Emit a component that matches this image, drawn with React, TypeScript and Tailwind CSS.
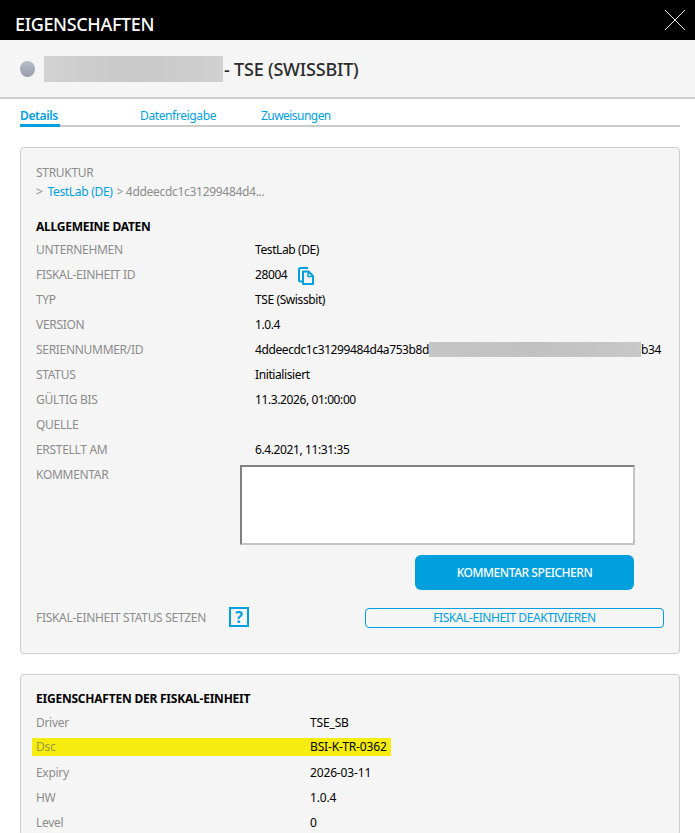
import React from "react";

const F = "font-['Noto_Sans','Open_Sans',sans-serif]";

function Row({ label, children }: { label: string; children?: React.ReactNode }) {
  return (
    <div className="flex h-[25px] items-center">
      <div className="w-[219px] shrink-0 text-[#8c8c8c]">{label}</div>
      <div className="flex items-center whitespace-nowrap tracking-[-0.4px] text-black">{children}</div>
    </div>
  );
}

function Row2({ label, value }: { label: string; value: string }) {
  return (
    <div className="flex h-[25px] items-center">
      <div className="w-[274px] shrink-0 text-[#8c8c8c]">{label}</div>
      <div className="whitespace-nowrap tracking-[-0.15px] text-black">{value}</div>
    </div>
  );
}

export default function App() {
  return (
    <div className={`${F} h-[833px] w-[695px] overflow-hidden bg-white text-[12px] tracking-[-0.3px]`}>
      <header className="flex h-10 items-center justify-between bg-black pl-[15px] pr-[10px] text-white">
        <div className="pt-[9px] text-[18px] font-medium tracking-[-0.35px]">EIGENSCHAFTEN</div>
        <svg width="20" height="20" viewBox="0 0 20 20" stroke="#e8e8e8" strokeWidth="1" fill="none">
          <path d="M0 0 L20 20 M20 0 L0 20" />
        </svg>
      </header>

      <section className="flex h-[59px] items-center border-b-2 border-[#cccccc] bg-[#f5f5f5] pl-5">
        <span className="h-[16px] w-[15px] rounded-full bg-gradient-to-b from-[#b8bcc8] to-[#9a9eac]" />
        <span className="ml-[9px] h-[26px] w-[179px] bg-gradient-to-r from-[#d2d2d2] via-[#c8c8c8] to-[#d0d0d0]" />
        <span className="ml-[1px] pt-[2px] text-[18px] font-medium tracking-[-0.2px] text-[#2b2b2b]">- TSE (SWISSBIT)</span>
      </section>

      <nav className="ml-5 mr-[15px] mt-[8px] flex h-[20px] border-b-2 border-[#cccccc] tracking-[-0.38px] text-[#00a0df]">
        <div className="-mb-[2px] w-[40px] border-b-[3px] border-[#00a0df] font-semibold">Details</div>
        <div className="ml-[80px]">Datenfreigabe</div>
        <div className="ml-[45px] tracking-[-0.55px]">Zuweisungen</div>
      </nav>

      <section className="ml-5 mr-[15px] mt-5 h-[507px] rounded-[4px] border border-[#cccccc] bg-[#f5f5f5] pl-[15px] pr-[15px] pt-[15px]">
        <div className="flex h-[19px] items-center text-[#8c8c8c]">STRUKTUR</div>
        <div className="flex h-[19px] items-center whitespace-pre text-[#8c8c8c]">
          {"> "}
          <span className="ml-[2px] mr-[1px] text-[#00a0df]">TestLab (DE)</span>
          {" > 4ddeecdc1c31299484d4..."}
        </div>
        <div className="mt-[16px] flex h-[20px] items-center font-bold tracking-[-0.25px] text-black">ALLGEMEINE DATEN</div>
        <div>
          <Row label="UNTERNEHMEN">TestLab (DE)</Row>
          <Row label="FISKAL-EINHEIT ID">
            28004
            <svg width="16" height="18" viewBox="0 0 16 18" className="ml-[11px] mt-[2px]" fill="none" stroke="#00a0df" strokeWidth="2" strokeLinejoin="round">
              <path d="M4 14.5 H2.5 Q1 14.5 1 13 V2.5 Q1 1 2.5 1 H10" />
              <path d="M5 4.5 H10.5 L15 9 V17 H5 Z" />
              <path d="M10 4.5 V9.5 H15" strokeWidth="1.5" />
            </svg>
          </Row>
          <Row label="TYP">TSE (Swissbit)</Row>
          <Row label="VERSION">1.0.4</Row>
          <Row label="SERIENNUMMER/ID">
            4ddeecdc1c31299484d4a753b8d
            <span className="h-[15px] w-[212px] bg-gradient-to-r from-[#c6c6c6] via-[#c0c0c0] to-[#c8c8c8]" />
            b34
          </Row>
          <Row label="STATUS">Initialisiert</Row>
          <Row label="GÜLTIG BIS">11.3.2026, 01:00:00</Row>
          <Row label="QUELLE" />
          <Row label="ERSTELLT AM">6.4.2021, 11:31:35</Row>
        </div>
        <div className="mt-[3px] flex">
          <div className="w-[204px] shrink-0 pt-[1px] text-[#8c8c8c]">KOMMENTAR</div>
          <div className="h-[80px] w-[395px] border-2 border-b-[#c4c4c4] border-l-[#808080] border-r-[#c4c4c4] border-t-[#808080] bg-white" />
        </div>
        <div className="mt-[10px] flex justify-end pr-[30px]">
          <button className="h-[35px] w-[219px] rounded-[6px] bg-[#00a0df] text-[12px] font-medium tracking-[-0.45px] text-white">
            KOMMENTAR SPEICHERN
          </button>
        </div>
        <div className="mt-[16px] flex items-center">
          <div className="mt-[2px] w-[193px] shrink-0 text-[#8c8c8c]">FISKAL-EINHEIT STATUS SETZEN</div>
          <div className="flex h-5 w-5 shrink-0 items-center justify-center border-2 border-[#00a0df] text-[16px] font-bold leading-none text-[#00a0df]">
            ?
          </div>
          <button className="ml-[116px] mt-[2px] h-5 w-[299px] shrink-0 rounded-[4px] border border-[#00a0df] text-[12px] leading-none tracking-[-0.42px] text-[#00a0df]">
            FISKAL-EINHEIT DEAKTIVIEREN
          </button>
        </div>
      </section>

      <section className="ml-5 mr-[15px] mt-5 rounded-[4px] border border-[#cccccc] bg-[#f5f5f5] pl-[15px] pt-[14px]">
        <div className="flex h-[20px] items-center font-bold tracking-[-0.22px] text-black">EIGENSCHAFTEN DER FISKAL-EINHEIT</div>
        <div className="mt-[1px]">
          <Row2 label="Driver" value="TSE_SB" />
          <div className="-ml-1 h-[25px] pt-[3px]">
            <div className="flex h-[18px] w-[359px] items-center bg-[#f7ec0f] pl-1">
              <div className="w-[274px] shrink-0 text-[#9a9a3a]">Dsc</div>
              <div className="whitespace-nowrap tracking-[-0.15px] text-black">BSI-K-TR-0362</div>
            </div>
          </div>
          <Row2 label="Expiry" value="2026-03-11" />
          <Row2 label="HW" value="1.0.4" />
          <Row2 label="Level" value="0" />
        </div>
      </section>
    </div>
  );
}
